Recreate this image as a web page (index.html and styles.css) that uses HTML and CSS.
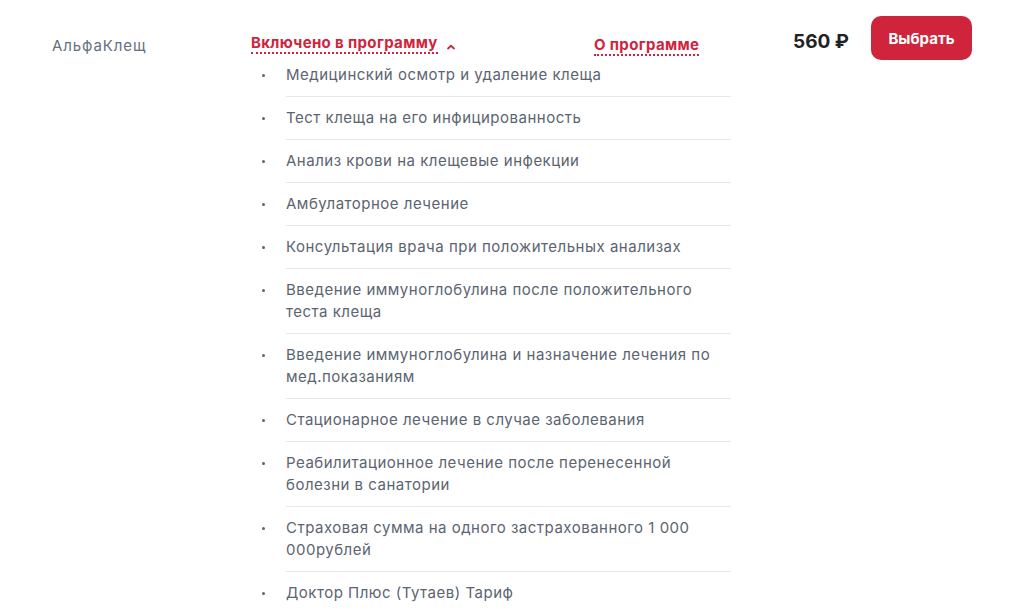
FILE: index.html
```html
<!DOCTYPE html>
<html lang="ru">
<head>
<meta charset="utf-8">
<link rel="stylesheet" href="styles.css">
</head>
<body>
<div class="row">
  <div class="name">АльфаКлещ</div>
  <div class="toggle">
    <span class="link">Включено в программу</span>
    <svg class="chev" width="10" height="6" viewBox="0 0 10 6"><path d="M1.5 5 L5 1.8 L8.5 5" fill="none" stroke="#d0243c" stroke-width="1.8"/></svg>
  </div>
  <div class="about"><span class="link">О программе</span></div>
  <div class="price">560 ₽</div>
  <button class="btn">Выбрать</button>
  <ul class="list">
    <li>Медицинский осмотр и удаление клеща</li>
    <li>Тест клеща на его инфицированность</li>
    <li>Анализ крови на клещевые инфекции</li>
    <li>Амбулаторное лечение</li>
    <li>Консультация врача при положительных анализах</li>
    <li>Введение иммуноглобулина после положительного теста клеща</li>
    <li>Введение иммуноглобулина и назначение лечения по мед.показаниям</li>
    <li>Стационарное лечение в случае заболевания</li>
    <li>Реабилитационное лечение после перенесенной болезни в санатории</li>
    <li>Страховая сумма на одного застрахованного 1 000 000рублей</li>
    <li>Доктор Плюс (Тутаев) Тариф</li>
  </ul>
</div>
</body>
</html>
```
FILE: styles.css
```css
html, body { margin: 0; padding: 0; background: #fff; }
body { font-family: "Inter", "Open Sans", sans-serif; color: #5b6470; }
.row { display: grid; grid-template-columns: 199px 343px 199px 78px 101px; padding: 16px 0 0 52px; align-items: start; }
.name { font-size: 15px; line-height: 22px; padding-top: 19px; color: #66707c; letter-spacing: 0.9px; }
.toggle { display: flex; align-items: center; padding-top: 18px; }
.link { color: #d0243c; font-weight: 700; font-size: 15px; line-height: 18px; border-bottom: 2px dotted #d0243c; letter-spacing: 0.35px; }
.chev { margin-left: 8px; margin-top: 6px; }
.about { padding-top: 18px; }
.price { padding-top: 14px; font-size: 19px; font-weight: 700; color: #222; line-height: 24px; }
.btn { width: 101px; height: 44px; border: none; border-radius: 10px; background: #d0243c; color: #fff; font-family: inherit; font-weight: 700; font-size: 15px; cursor: pointer; padding: 0; }
.list { grid-column: 2 / 4; list-style: none; margin: 4px 0 0 0; padding: 0 0 0 35px; width: 445px; }
.list li { position: relative; font-size: 15px; line-height: 22px; padding: 10px 0; border-bottom: 1px solid #e8e8e8; color: #5b6470; letter-spacing: 0.5px; }
.list li:first-child { padding-top: 0; }
.list li:last-child { border-bottom: none; }
.list li::before { content: ""; position: absolute; left: -24px; top: 20px; width: 3px; height: 3px; border-radius: 50%; background: #5b6470; }
.list li:first-child::before { top: 10px; }
```
